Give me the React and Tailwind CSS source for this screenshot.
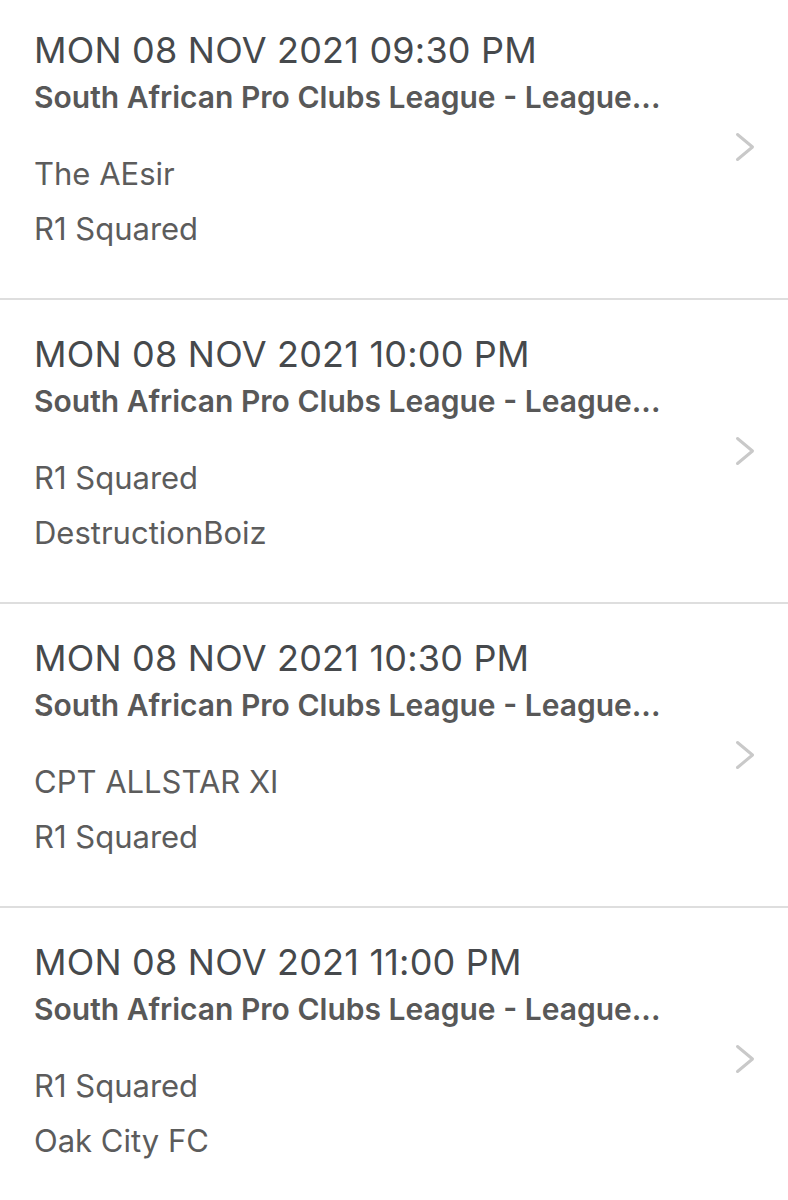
import React from "react";

const rows = [
  { date: "MON 08 NOV 2021 09:30 PM", a: "The AEsir", b: "R1 Squared" },
  { date: "MON 08 NOV 2021 10:00 PM", a: "R1 Squared", b: "DestructionBoiz" },
  { date: "MON 08 NOV 2021 10:30 PM", a: "CPT ALLSTAR XI", b: "R1 Squared" },
  { date: "MON 08 NOV 2021 11:00 PM", a: "R1 Squared", b: "Oak City FC" },
];

function Chevron() {
  return (
    <svg width="22" height="30" viewBox="0 0 22 30" fill="none">
      <path d="M3.5 2.5 L18.5 15 L3.5 27.5" stroke="#c9c9c9" strokeWidth="3" strokeLinecap="round" strokeLinejoin="round" />
    </svg>
  );
}

export default function App() {
  return (
    <div className="w-[788px] h-[1200px] overflow-hidden bg-white" style={{ fontFamily: 'Inter, sans-serif' }}>
      <div className="-mt-[4px]">
        {rows.map((r, i) => (
          <div key={i} className="flex h-[304px] items-center justify-between border-b-2 border-[#dedede] pl-[34px] pr-[32px]">
            <div className="flex flex-col self-start pt-[32px]">
              <div className="text-[36px] leading-[44px] tracking-[0.2px] text-[#46494c]">{r.date}</div>
              <div className="text-[30px] leading-[50px] font-semibold text-[#585858]">
                South African Pro Clubs League - League...
              </div>
              <div className="mt-[23.5px] text-[31px] leading-[55px] text-[#5c5c5c]">{r.a}</div>
              <div className="text-[31px] leading-[55px] text-[#5c5c5c]">{r.b}</div>
            </div>
            <Chevron />
          </div>
        ))}
      </div>
    </div>
  );
}
